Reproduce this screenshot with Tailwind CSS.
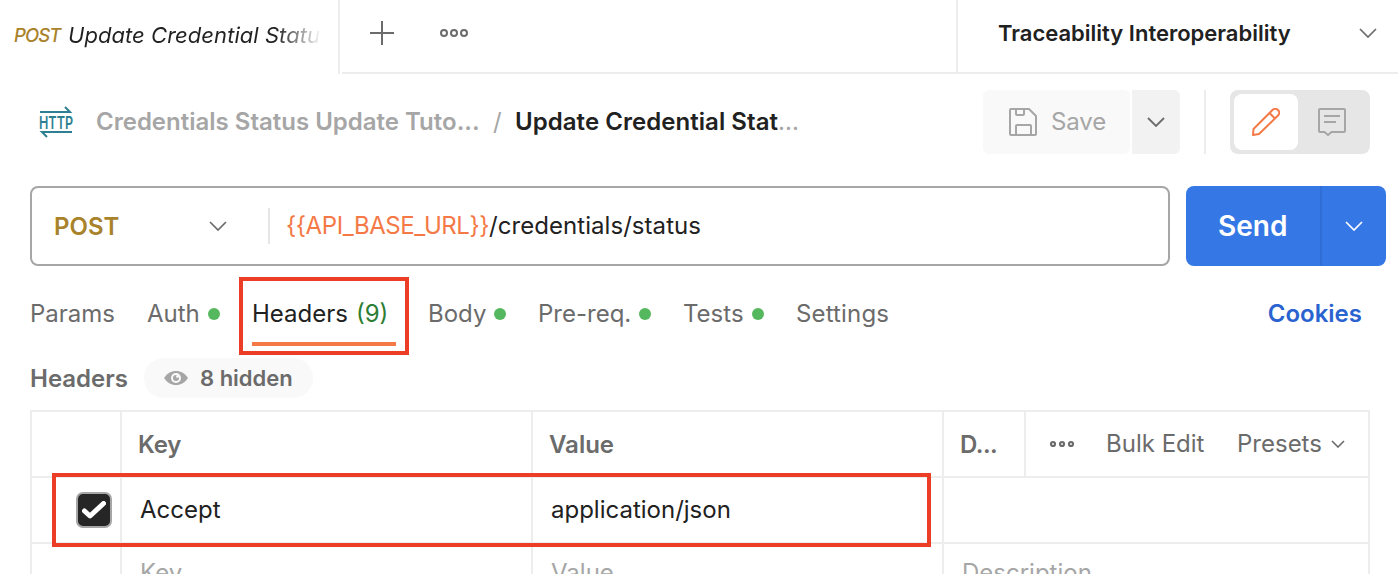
<!DOCTYPE html>
<html lang="en">
<head>
<meta charset="utf-8">
<title>Update Credential Status</title>
<script src="https://cdn.jsdelivr.net/npm/@tailwindcss/browser@4"></script>
</head>
<body class="relative flex h-[574px] w-[1398px] flex-col overflow-hidden bg-white font-['Inter',sans-serif] text-2xl/[32px] whitespace-nowrap text-[#6b6b6b]">
  <!-- Tab strip -->
  <header class="flex h-[74px] shrink-0">
    <div class="flex w-[340px] items-center border-r-2 border-[#ededed] pb-[4px] pl-[14px]">
      <span class="w-[54px] text-[18.5px] font-medium tracking-[-0.9px] text-[#a9822c] italic">POST</span>
      <span class="w-[254px] overflow-hidden bg-linear-to-r from-[#212121] from-82% to-transparent to-100% bg-clip-text text-[22px] tracking-[0.05px] text-transparent italic">Update Credential Status</span>
    </div>
    <div class="ml-[2px] flex w-[614px] items-center border-b-2 border-[#ededed] pb-[6px] pl-[28px] text-[#6b6b6b]">
      <svg class="size-[24px]" viewBox="0 0 24 24" fill="none" stroke="currentColor" stroke-width="2"><path d="M12 0v24M0 12h24"/></svg>
      <svg class="ml-[46px] h-[10px] w-[28px]" viewBox="0 0 28 10" fill="none" stroke="currentColor" stroke-width="2"><circle cx="4" cy="5" r="3"/><circle cx="14" cy="5" r="3"/><circle cx="24" cy="5" r="3"/></svg>
    </div>
    <div class="flex grow items-center justify-between border-b-2 border-l-2 border-[#ededed] pr-[21px] pb-[6px] pl-[40px]">
      <span class="text-[22px] font-semibold text-[#212121]">Traceability Interoperability</span>
      <svg class="h-[10px] w-[18px]" viewBox="0 0 18 10" fill="none" stroke="currentColor" stroke-width="1.700"><path d="M1 1l8 8 8-8"/></svg>
    </div>
  </header>

  <!-- Breadcrumb and actions -->
  <div class="mt-[16px] flex h-[64px] shrink-0 items-center pr-[28px] pl-[38px]">
    <svg class="h-[32px] w-[36px] text-[#2f7f92]" viewBox="0 0 36 32" fill="none" stroke="currentColor" stroke-width="2"><path d="M2 6h30L27 1M34 26H4l5 5"/><text x="1" y="22.500" textLength="34" lengthAdjust="spacingAndGlyphs" font-size="17.500" font-weight="600" fill="currentColor" stroke="none">HTTP</text></svg>
    <span class="ml-[22px] w-[397px] font-semibold text-[#a6a6a6]">Credentials Status Update Tuto...</span>
    <span class="w-[22px] text-[#a6a6a6]">/</span>
    <span class="font-semibold tracking-[0.05px] text-[#212121]">Update Credential Stat<span class="font-normal text-[#a6a6a6]">...</span></span>
    <div class="ml-auto flex h-full">
      <button class="flex w-[147px] items-center rounded-[6px] bg-[#f9f9f9] pl-[26px] text-[#a6a6a6]">
        <svg class="size-[28px]" viewBox="0 0 28 28" fill="none" stroke="currentColor" stroke-width="2" stroke-linejoin="round"><path d="M1 2a1 1 0 0 1 1-1h18l7 7v18a1 1 0 0 1-1 1H2a1 1 0 0 1-1-1zM7 1v5a1 1 0 0 0 1 1h6a1 1 0 0 0 1-1V1M7 27V18a1 1 0 0 1 1-1h13a1 1 0 0 1 1 1v9"/></svg>
        <span class="ml-[14px] tracking-[-0.1px]">Save</span>
      </button>
      <button class="ml-[2px] flex w-[48px] items-center justify-center rounded-r-[6px] bg-[#f2f2f2]">
        <svg class="h-[10px] w-[18px]" viewBox="0 0 18 10" fill="none" stroke="currentColor" stroke-width="1.800"><path d="M1 1l8 8 8-8"/></svg>
      </button>
      <div class="ml-[24px] w-[2px] bg-[#ededed]"></div>
      <div class="ml-[24px] flex w-[140px] items-center rounded-[8px] bg-[#e6e6e6] p-[4px]">
        <div class="flex h-[56px] w-[64px] items-center justify-center rounded-[8px] bg-white text-[#f47946]">
          <svg class="size-[28px]" viewBox="0 0 28 28" fill="none" stroke="currentColor" stroke-width="2" stroke-linejoin="round"><path d="M1 27l.500-6L20.500 2a3.500 3.500 0 0 1 5.500 5.500L7 26zM17.500 5l5.500 5.500"/></svg>
        </div>
        <svg class="ml-[20px] size-[28px] text-[#a6a6a6]" viewBox="0 0 28 28" fill="none" stroke="currentColor" stroke-width="2" stroke-linejoin="round"><path d="M2 1h24a1 1 0 0 1 1 1v21a1 1 0 0 1-1 1H13.500l-3.500 3-3.500-3H2a1 1 0 0 1-1-1V2a1 1 0 0 1 1-1zM6 8h16M6 14h12"/></svg>
      </div>
    </div>
  </div>

  <!-- Request line -->
  <div class="mt-[32px] flex h-[80px] shrink-0 gap-[16px] pl-[30px]">
    <div class="flex w-[1140px] items-center rounded-[8px] border-2 border-[#a6a6a6]">
      <span class="ml-[22px] w-[155px] pt-[2px] font-semibold text-[#a9822c]">POST</span>
      <svg class="h-[10px] w-[18px]" viewBox="0 0 18 10" fill="none" stroke="currentColor" stroke-width="1.700"><path d="M1 1l8 8 8-8"/></svg>
      <div class="ml-[41px] h-[36px] w-[2px] bg-[#e6e6e6]"></div>
      <span class="ml-[16px] tracking-[0.05px] text-[#212121]"><span class="tracking-[-0.430px] text-[#f47946]">{{API_BASE_URL}}</span>/credentials/status</span>
    </div>
    <div class="flex w-[200px] overflow-hidden rounded-[8px] bg-[#3578e5] text-white">
      <div class="flex w-[136px] items-center border-r-2 border-[#306ed5] pl-[32px] text-[28px] font-semibold">Send</div>
      <div class="flex grow items-center justify-center">
        <svg class="h-[10px] w-[18px]" viewBox="0 0 18 10" fill="none" stroke="currentColor" stroke-width="1.700"><path d="M1 1l8 8 8-8"/></svg>
      </div>
    </div>
  </div>

  <!-- Request sections -->
  <nav class="mt-[16px] flex h-[64px] shrink-0 items-center pl-[30px]">
    <span class="w-[117px]">Params</span>
    <span class="flex w-[105px] items-center justify-between pr-[32px]"><span>Auth</span><i class="size-[12px] shrink-0 rounded-full bg-[#56b85e]"></i></span>
    <span class="flex h-full w-[144px] items-center border-b-4 border-[#f47946] pt-[4px] text-[#212121]">Headers<span class="ml-[8px] text-[#2d7d32]">(9)</span></span>
    <span class="ml-[32px] flex w-[78px] items-center justify-between"><span>Body</span><i class="size-[12px] shrink-0 rounded-full bg-[#56b85e]"></i></span>
    <span class="ml-[32px] flex w-[113px] items-center justify-between"><span>Pre-req.</span><i class="size-[12px] shrink-0 rounded-full bg-[#56b85e]"></i></span>
    <span class="ml-[32px] flex w-[81px] items-center justify-between"><span>Tests</span><i class="size-[12px] shrink-0 rounded-full bg-[#56b85e]"></i></span>
    <span class="ml-[32px] tracking-[0.15px]">Settings</span>
    <span class="mr-[36px] ml-auto font-semibold text-[#2a63cf]">Cookies</span>
  </nav>

  <div class="mt-[12px] flex h-[40px] shrink-0 items-center pl-[30px] font-semibold">
    <span class="w-[114px] pt-[2px]">Headers</span>
    <div class="flex h-full w-[169px] items-center rounded-full bg-[#f9f9f9] pl-[20px]">
      <svg class="h-[14px] w-[24px]" viewBox="0 0 24 14"><path d="M0 7C3 2.500 7 0 12 0s9 2.500 12 7c-3 4.500-7 7-12 7S3 11.500 0 7z" fill="#a6a6a6"/><circle cx="12" cy="7" r="5" fill="#f9f9f9"/><circle cx="12" cy="7" r="3" fill="#a6a6a6"/><circle cx="13.500" cy="5.500" r="1.400" fill="#f9f9f9"/></svg>
      <span class="ml-[12px] text-[22px]">8 hidden</span>
    </div>
  </div>

  <!-- Headers table -->
  <div class="mt-[12px] ml-[30px] w-[1340px] shrink-0 border-2 border-b-0 border-[#ededed]">
    <div class="grid h-[66px] grid-cols-[90px_411px_411px_82px_1fr] border-b-2 border-[#ededed] font-semibold">
      <div class="border-r-2 border-[#ededed]"></div>
      <div class="flex items-center border-r-2 border-[#ededed] pt-[2px] pl-[16px] tracking-[-0.2px]">Key</div>
      <div class="flex items-center border-r-2 border-[#ededed] pt-[2px] pl-[16px]">Value</div>
      <div class="flex items-center border-r-2 border-[#ededed] pt-[2px] pl-[16px] tracking-[-0.5px]">D...</div>
      <div class="flex items-center pl-[23px] font-normal">
        <svg class="h-[8px] w-[26px]" viewBox="0 0 26 8" fill="none" stroke="currentColor" stroke-width="2.200"><circle cx="4" cy="4" r="2"/><circle cx="13" cy="4" r="2"/><circle cx="22" cy="4" r="2"/></svg>
        <span class="ml-[31px] w-[131px]">Bulk Edit</span>
        <span class="w-[94px]">Presets</span>
        <svg class="h-[8px] w-[14px]" viewBox="0 0 14 8" fill="none" stroke="currentColor" stroke-width="1.600"><path d="M1 1l6 6 6-6"/></svg>
      </div>
    </div>
    <div class="grid h-[66px] grid-cols-[90px_411px_411px_1fr] border-b-2 border-[#ededed] text-[#212121]">
      <div class="flex items-center border-r-2 border-[#ededed] pl-[44px]">
        <span class="flex size-[36px] items-center justify-center rounded-[7px] border-2 border-[#a6a6a6] bg-[#262626]">
          <svg class="h-[18px] w-[24px]" viewBox="0 0 24 18" fill="none" stroke="#fff" stroke-width="5" stroke-linecap="round" stroke-linejoin="round"><path d="M2.500 10l5.500 5L21.500 2.500"/></svg>
        </span>
      </div>
      <div class="flex items-center border-r-2 border-[#ededed] pl-[18px]">Accept</div>
      <div class="flex items-center border-r-2 border-[#ededed] pl-[18px]">application/json</div>
      <div></div>
    </div>
    <div class="grid h-[30px] grid-cols-[90px_411px_411px_1fr] overflow-hidden text-[#a6a6a6]">
      <div class="border-r-2 border-[#ededed]"></div>
      <div class="border-r-2 border-[#ededed] pt-[13px] pl-[18px]">Key</div>
      <div class="border-r-2 border-[#ededed] pt-[13px] pl-[18px]">Value</div>
      <div class="pt-[13px] pl-[18px]">Description</div>
    </div>
  </div>

  <!-- Highlight frames laid over the page -->
  <div class="absolute top-[277px] left-[239px] h-[78px] w-[170px] border-4 border-[#ec3e26]"></div>
  <div class="absolute top-[473px] left-[52px] h-[74px] w-[879px] border-4 border-[#ec3e26]"></div>
</body>
</html>
